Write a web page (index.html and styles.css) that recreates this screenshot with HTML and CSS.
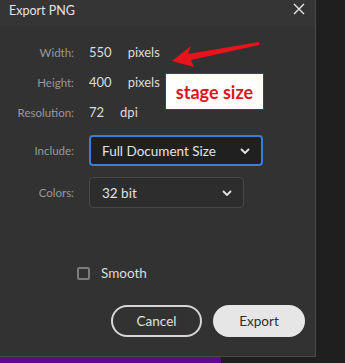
FILE: index.html
```html
<!DOCTYPE html>
<html lang="en">
<head>
  <meta charset="UTF-8" />
  <title>Export PNG</title>
  <link rel="stylesheet" href="styles.css">
</head>
<body>
  <div class="dialog">
    <div class="titlebar">
      <span class="title">Export PNG</span>
      <svg class="close" width="12" height="12" viewBox="0 0 12 12">
        <path d="M1 1 L11 11 M11 1 L1 11" stroke="#e8e8e8" stroke-width="1.4" fill="none"/>
      </svg>
    </div>

    <div class="content">
      <div class="info-row">
        <span class="label">Width:</span>
        <span class="value">550</span>
        <span class="unit">pixels</span>
      </div>
      <div class="info-row">
        <span class="label">Height:</span>
        <span class="value">400</span>
        <span class="unit">pixels</span>
      </div>
      <div class="info-row">
        <span class="label">Resolution:</span>
        <span class="value">72</span>
        <span class="unit">dpi</span>
      </div>

      <div class="field-row include-row">
        <span class="label">Include:</span>
        <div class="select focused">
          <span>Full Document Size</span>
          <svg class="chevron" width="10" height="6" viewBox="0 0 10 6">
            <path d="M1 1 L5 5 L9 1" stroke="#e6e6e6" stroke-width="1.8" fill="none"/>
          </svg>
        </div>
      </div>
      <div class="field-row colors-row">
        <span class="label">Colors:</span>
        <div class="select short">
          <span>32 bit</span>
          <svg class="chevron" width="10" height="6" viewBox="0 0 10 6">
            <path d="M1 1 L5 5 L9 1" stroke="#e6e6e6" stroke-width="1.8" fill="none"/>
          </svg>
        </div>
      </div>

      <label class="check-row">
        <span class="checkbox"></span>
        <span>Smooth</span>
      </label>

      <div class="buttons">
        <button class="btn cancel">Cancel</button>
        <button class="btn export">Export</button>
      </div>
    </div>

    <!-- annotation drawn over the screenshot -->
    <svg class="arrow" width="100" height="32" viewBox="165 38 100 32">
      <polygon points="172,61 191,46 188,54 259,42 259,45 191,60 194,67" fill="#e8141c"/>
    </svg>
    <div class="callout">stage size</div>
  </div>
  <div class="taskbar"></div>
</body>
</html>
```

FILE: styles.css
```css
body {
  margin: 0;
  background-color: #1f1f1f;
  font-family: 'Lato', sans-serif;
  color: #d8d8d8;
  height: 363px;
  overflow: hidden;
}

.dialog {
  position: relative;
  width: 315px;
  height: 356px;
  background: #323232;
  border-right: 1px solid #4a4a4a;
  border-bottom: 1px solid #4a4a4a;
}

.titlebar {
  height: 26px;
  background: #353535;
  display: flex;
  justify-content: space-between;
  align-items: flex-start;
  padding: 3px 10px 0 9px;
  box-sizing: border-box;
}

.title {
  font-size: 12.5px;
  color: #e4e4e4;
  line-height: 16px;
}

.content {
  padding: 11px 10px 0 0;
}

.info-row {
  display: flex;
  align-items: center;
  height: 30px;
  font-size: 13px;
}

.label {
  width: 74px;
  flex-shrink: 0;
  text-align: right;
  color: #999999;
  font-size: 11.5px;
  margin-right: 15px;
}

.value {
  color: #dcdcdc;
  margin-right: 16px;
}

.unit {
  color: #dcdcdc;
}

.field-row {
  display: flex;
  align-items: center;
}

.include-row {
  margin-top: 8px;
}

.colors-row {
  margin-top: 11px;
}

.select {
  display: flex;
  justify-content: space-between;
  align-items: center;
  box-sizing: border-box;
  height: 31px;
  padding: 0 11px 0 12px;
  font-size: 13.5px;
  color: #e2e2e2;
  border-radius: 4px;
}

.select.focused {
  width: 174px;
  background: #202020;
  border: 2px solid #3b7bd9;
  padding-left: 11px;
}

.select.short {
  width: 155px;
  background: #2d2d2d;
  border: 1px solid #474747;
  padding-right: 11px;
}

.check-row {
  display: flex;
  align-items: center;
  height: 20px;
  margin-top: 55px;
  margin-left: 77px;
  font-size: 13.5px;
  color: #dcdcdc;
}

.checkbox {
  width: 13px;
  height: 13px;
  box-sizing: border-box;
  border: 2px solid #7c7c7c;
  border-radius: 2px;
  margin-right: 11px;
}

.buttons {
  display: flex;
  justify-content: flex-end;
  gap: 11px;
  margin-top: 22px;
}

.btn {
  height: 32px;
  border-radius: 16px;
  font-family: 'Lato', sans-serif;
  font-size: 13.5px;
  box-sizing: border-box;
  cursor: pointer;
}

.cancel {
  width: 91px;
  background: transparent;
  color: #e0e0e0;
  border: 2px solid #d6d6d6;
}

.export {
  width: 92px;
  background: #e6e6e6;
  color: #2e2e2e;
  border: none;
}

.arrow {
  position: absolute;
  left: 165px;
  top: 38px;
}

.callout {
  position: absolute;
  left: 165px;
  top: 73px;
  width: 99px;
  height: 37px;
  box-sizing: border-box;
  background: #ffffff;
  border: 1px solid #9b1c1c;
  color: #e01420;
  font-size: 18px;
  font-weight: bold;
  display: flex;
  align-items: center;
  justify-content: center;
}

.taskbar {
  width: 221px;
  height: 6px;
  background: #5a0c8c;
}
```
